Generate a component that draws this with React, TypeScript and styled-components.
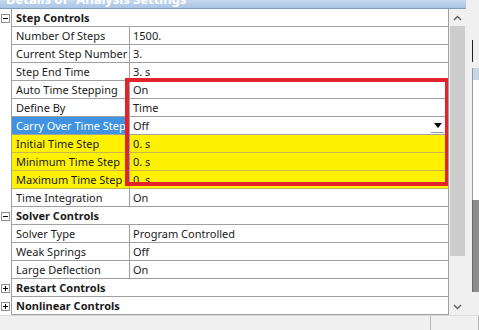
import React from "react";
import styled, { createGlobalStyle } from "styled-components";

const Global = createGlobalStyle`
  html, body { margin: 0; padding: 0; background: #ffffff; }
  body { font-family: "Noto Sans", "DejaVu Sans", sans-serif; }
`;

const Frame = styled.div`
  width: 479px;
  height: 330px;
  overflow: hidden;
  display: flex;
  flex-direction: column;
  background: #f0f0f0;
`;

const Top = styled.div`
  display: flex;
  flex: 1;
  min-height: 0;
`;

const LeftPanel = styled.div`
  width: 466px;
  display: flex;
  flex-direction: column;
  background: #ffffff;
`;

const TitleBar = styled.div`
  height: 9px;
  overflow: hidden;
  background: linear-gradient(#c5d9ef, #a9c5e6);
  border-bottom: 1px solid #7f9db9;
  box-sizing: border-box;
`;

const TitleText = styled.div`
  margin-top: -9px;
  padding-left: 6px;
  font-size: 13px;
  line-height: 16px;
  font-weight: bold;
  color: #ffffff;
  white-space: nowrap;
`;

const Body = styled.div`
  display: flex;
  flex: 1;
  min-height: 0;
`;

const GridWrap = styled.div`
  position: relative;
  width: 449px;
  border-right: 1px solid #a0a0a0;
  box-sizing: border-box;
  overflow: hidden;
`;

const Row = styled.div<{ $yellow?: boolean }>`
  display: flex;
  height: 18px;
  background: ${(p) => (p.$yellow ? "#fff200" : "#ffffff")};
`;

const Gutter = styled.div`
  width: 12px;
  flex: none;
  border-right: 1px solid #a0a0a0;
  box-sizing: border-box;
  background: #ffffff;
  display: flex;
  align-items: center;
  justify-content: center;
`;

const Toggle = styled.div`
  width: 9px;
  height: 9px;
  box-sizing: border-box;
  border: 1px solid #8f8f8f;
  background: #ffffff;
  display: flex;
  align-items: center;
  justify-content: center;
  margin-left: -1px;
`;

const Cells = styled.div<{ $yellow?: boolean }>`
  flex: 1;
  display: flex;
  border-bottom: 1px solid ${(p) => (p.$yellow ? "#c9b84a" : "#a0a0a0")};
  box-sizing: border-box;
`;

const NameCell = styled.div<{ $selected?: boolean }>`
  width: 118px;
  flex: none;
  box-sizing: border-box;
  border-right: 1px solid #a0a0a0;
  padding-left: 4px;
  font-size: 11px;
  line-height: 17px;
  white-space: nowrap;
  overflow: hidden;
  color: ${(p) => (p.$selected ? "#ffffff" : "#1a1a1a")};
  background: ${(p) => (p.$selected ? "#3f93e0" : "transparent")};
`;

const ValueCell = styled.div`
  flex: 1;
  position: relative;
  padding-left: 3px;
  font-size: 11px;
  line-height: 17px;
  white-space: nowrap;
  color: #1a1a1a;
`;

const GroupCell = styled.div`
  flex: 1;
  padding-left: 4px;
  font-size: 11px;
  line-height: 17px;
  font-weight: bold;
  color: #1a1a1a;
  border-bottom: 1px solid #a0a0a0;
  box-sizing: border-box;
`;

const DropButton = styled.div`
  position: absolute;
  right: 4px;
  top: 1px;
  width: 13px;
  height: 15px;
  border-bottom: 1px solid #9a9a9a;
  box-sizing: border-box;
  display: flex;
  align-items: center;
  justify-content: center;
`;

const RedBox = styled.div`
  position: absolute;
  left: 125px;
  top: 69px;
  width: 324px;
  height: 108px;
  border: 4px solid #e2232c;
  box-sizing: border-box;
  pointer-events: none;
`;

const ScrollBar = styled.div`
  width: 17px;
  display: flex;
  flex-direction: column;
  background: #f0f0f0;
`;

const ScrollArrow = styled.div`
  height: 17px;
  display: flex;
  align-items: center;
  justify-content: center;
  background: #f0f0f0;
`;

const Thumb = styled.div`
  height: 230px;
  margin: 0 1px;
  background: #cdcdcd;
`;

const Track = styled.div`
  flex: 1;
`;

const RightPanel = styled.div`
  width: 13px;
  display: flex;
  flex-direction: column;
  background: #f0f0f0;
  padding-left: 6px;
  box-sizing: border-box;
`;

const RightBlock = styled.div<{ $h: number; $bg: string; $border?: string }>`
  height: ${(p) => p.$h}px;
  background: ${(p) => p.$bg};
  border-left: ${(p) => (p.$border ? `1px solid ${p.$border}` : "none")};
  box-sizing: border-box;
`;

const StatusBar = styled.div`
  height: 15px;
  display: flex;
  background: #f0f0f0;
  border-top: 1px solid #dadada;
  box-sizing: border-box;
`;

const StatusPane = styled.div<{ $w?: number }>`
  width: ${(p) => (p.$w ? `${p.$w}px` : "auto")};
  flex: ${(p) => (p.$w ? "none" : "1")};
  border-right: 1px solid #b5b5b5;
  box-sizing: border-box;
`;

type Item =
  | { kind: "group"; label: string; open: boolean }
  | { kind: "prop"; name: string; value: string; yellow?: boolean; selected?: boolean; drop?: boolean };

const items: Item[] = [
  { kind: "group", label: "Step Controls", open: true },
  { kind: "prop", name: "Number Of Steps", value: "1500." },
  { kind: "prop", name: "Current Step Number", value: "3." },
  { kind: "prop", name: "Step End Time", value: "3. s" },
  { kind: "prop", name: "Auto Time Stepping", value: "On" },
  { kind: "prop", name: "Define By", value: "Time" },
  { kind: "prop", name: "Carry Over Time Step", value: "Off", selected: true, drop: true },
  { kind: "prop", name: "Initial Time Step", value: "0. s", yellow: true },
  { kind: "prop", name: "Minimum Time Step", value: "0. s", yellow: true },
  { kind: "prop", name: "Maximum Time Step", value: "0. s", yellow: true },
  { kind: "prop", name: "Time Integration", value: "On" },
  { kind: "group", label: "Solver Controls", open: true },
  { kind: "prop", name: "Solver Type", value: "Program Controlled" },
  { kind: "prop", name: "Weak Springs", value: "Off" },
  { kind: "prop", name: "Large Deflection", value: "On" },
  { kind: "group", label: "Restart Controls", open: false },
  { kind: "group", label: "Nonlinear Controls", open: false },
];

const Chevron = ({ up }: { up?: boolean }) => (
  <svg width="9" height="6" viewBox="0 0 9 6">
    <path
      d={up ? "M1 5 L4.5 1.5 L8 5" : "M1 1 L4.5 4.5 L8 1"}
      fill="none"
      stroke="#606060"
      strokeWidth="1.4"
    />
  </svg>
);

const Sign = ({ plus }: { plus?: boolean }) => (
  <svg width="7" height="7" viewBox="0 0 7 7">
    <path d={plus ? "M1 3.5 H6 M3.5 1 V6" : "M1 3.5 H6"} stroke="#000" strokeWidth="1" />
  </svg>
);

export default function App() {
  return (
    <>
      <Global />
      <Frame>
        <Top>
          <LeftPanel>
            <TitleBar>
              <TitleText>Details of "Analysis Settings"</TitleText>
            </TitleBar>
            <Body>
              <GridWrap>
                {items.map((it, i) =>
                  it.kind === "group" ? (
                    <Row key={i}>
                      <Gutter>
                        <Toggle>
                          <Sign plus={!it.open} />
                        </Toggle>
                      </Gutter>
                      <GroupCell>{it.label}</GroupCell>
                    </Row>
                  ) : (
                    <Row key={i} $yellow={it.yellow}>
                      <Gutter />
                      <Cells $yellow={it.yellow}>
                        <NameCell $selected={it.selected}>{it.name}</NameCell>
                        <ValueCell>
                          {it.value}
                          {it.drop && (
                            <DropButton>
                              <svg width="8" height="5" viewBox="0 0 8 5">
                                <path d="M0 0 H8 L4 5 Z" fill="#000" />
                              </svg>
                            </DropButton>
                          )}
                        </ValueCell>
                      </Cells>
                    </Row>
                  )
                )}
                <RedBox />
              </GridWrap>
              <ScrollBar>
                <ScrollArrow>
                  <Chevron up />
                </ScrollArrow>
                <Thumb />
                <Track />
                <ScrollArrow>
                  <Chevron />
                </ScrollArrow>
              </ScrollBar>
            </Body>
          </LeftPanel>
          <RightPanel>
            <RightBlock $h={40} $bg="#f0f0f0" />
            <RightBlock $h={22} $bg="#f0f0f0" $border="#202020" />
            <RightBlock $h={6} $bg="#f0f0f0" />
            <RightBlock $h={12} $bg="#c9d5e2" $border="#8899aa" />
            <RightBlock $h={120} $bg="#ffffff" $border="#9a9a9a" />
            <RightBlock $h={92} $bg="#8c8c8c" $border="#6a6a6a" />
            <RightBlock $h={20} $bg="#f0f0f0" />
          </RightPanel>
        </Top>
        <StatusBar>
          <StatusPane $w={431} />
          <StatusPane />
        </StatusBar>
      </Frame>
    </>
  );
}
